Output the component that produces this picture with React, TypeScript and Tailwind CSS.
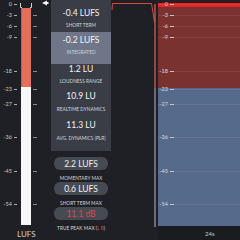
import { FC } from "react";

interface iLevel {
  v: string;
  y: number;
  hi?: boolean;
}

const levels: Array<iLevel> = [
  { v: "0", y: 4 },
  { v: "-3", y: 15 },
  { v: "-6", y: 26 },
  { v: "-9", y: 37 },
  { v: "-18", y: 71 },
  { v: "-23", y: 89, hi: true },
  { v: "-27", y: 104 },
  { v: "-36", y: 137 },
  { v: "-45", y: 171 },
  { v: "-54", y: 204 },
];

interface iStat {
  value: string;
  label: string;
  h: string;
  pt: string;
  gap: string;
  active?: boolean;
}

const stats: Array<iStat> = [
  { value: "-0.4 LUFS", label: "SHORT TERM", h: "h-[32px]", pt: "pt-[8px]", gap: "mt-[4px]" },
  { value: "-0.2 LUFS", label: "INTEGRATED", h: "h-[32px]", pt: "pt-[3px]", gap: "mt-[4px]", active: true },
  { value: "1.2 LU", label: "LOUDNESS RANGE", h: "h-[27px]", pt: "pt-0", gap: "mt-[4px]" },
  { value: "10.9 LU", label: "REALTIME DYNAMICS", h: "h-[28px]", pt: "pt-0", gap: "mt-[5px]" },
  { value: "11.3 LU", label: "AVG. DYNAMICS (PLR)", h: "h-[27px]", pt: "pt-[1px]", gap: "mt-[5px]" },
];

const StatRow: FC<iStat> = ({ value, label, h, pt, gap, active }) => (
  <div className={`${h} ${pt} flex flex-col items-center ${active ? "bg-[#6f7687]" : ""}`}>
    <div className="h-[10px] leading-[10px] text-[8.5px] text-[#f4f4f6]">{value}</div>
    <div className={`${gap} h-[6px] leading-[6px] text-[4.8px] text-[#d2d5db] whitespace-nowrap`}>{label}</div>
  </div>
);

const Pill: FC<{ value: string; label: React.ReactNode; red?: boolean }> = ({ value, label, red }) => (
  <div className="flex flex-col items-center">
    <div className="w-[54px] h-[13px] rounded-[6px] bg-[#464a53] flex items-center justify-center">
      <span className={`text-[8.5px] leading-[10px] ${red ? "text-[#e0444c]" : "text-[#f2f2f4]"}`}>{value}</span>
    </div>
    <div className="mt-[5px] h-[6px] leading-[6px] text-[4.8px] text-[#d2d5db] whitespace-nowrap">{label}</div>
  </div>
);

const App: FC = () => {
  return (
    <div className="w-[240px] h-[240px] overflow-hidden bg-[#1f2025] flex font-['Lato',sans-serif]">
      {/* meter */}
      <div className="relative w-[51px] h-full flex flex-col">
        <div className="flex pl-[21px] pt-[8px]">
          <div className="w-[10px] h-[217px] flex flex-col">
            <div className="h-[79px] bg-[#e26f5e] border-l border-[#c85848]" />
            <div className="flex-1 bg-[#f7f7f7]" />
          </div>
        </div>
        <div className="mt-auto mb-[1px] pl-[17px] text-[8px] leading-[10px] text-[#d0d2d6]">LUFS</div>

        {levels.map((l) => (
          <div key={l.v} className="absolute left-0 h-[6px] flex items-center" style={{ top: l.y - 3 }}>
            <span
              className={`w-[12px] text-right text-[5.5px] leading-[6px] ${l.hi ? "text-[#d9c27c]" : "text-[#c9cbd0]"}`}
            >
              {l.v}
            </span>
            <span className="ml-[1.5px] w-[3.5px] h-px bg-[#a9abb0]" />
          </div>
        ))}
        {levels.slice(1).map((l) => (
          <div key={l.v} className="absolute left-[33px] w-[4px] h-px bg-[#85888e]" style={{ top: l.y }} />
        ))}
        <svg className="absolute left-0 top-0" width="51" height="10">
          <path d="M20.5 3 V7.5 H22" stroke="#d0d0d0" strokeWidth="1" fill="none" />
          <path d="M31.5 3 V7.5 H30" stroke="#d0d0d0" strokeWidth="1" fill="none" />
          <polygon points="42,3 47,0.5 47,5.5" fill="#f4f4f4" />
          <rect x="47" y="2" width="1.5" height="2" fill="#f4f4f4" />
        </svg>
      </div>

      {/* stats */}
      <div className="w-[60px] h-full flex flex-col">
        <div className="bg-[#3a3d45] pb-[5px] flex flex-col">
          {stats.map((s) => (
            <StatRow key={s.label} {...s} />
          ))}
        </div>
        <div className="mt-[6px] flex flex-col gap-[1px]">
          <Pill value="2.2 LUFS" label="MOMENTARY MAX" />
          <Pill value="0.6 LUFS" label="SHORT TERM MAX" />
          <Pill
            value="11.1 dB"
            red
            label={
              <>
                TRUE PEAK MAX (<span className="text-[#e0444c]">L</span> <span className="text-[#e0444c]">R</span>)
              </>
            }
          />
        </div>
      </div>

      {/* history line */}
      <div className="w-[47px] h-full">
        <svg width="47" height="240">
          <path d="M1 10 L1.5 3.5 H40.5 L43.5 22" stroke="#d9463f" strokeWidth="1" fill="none" />
          <line x1="44" y1="4" x2="44" y2="88" stroke="#d9665c" strokeWidth="1.2" />
          <line x1="44" y1="88" x2="44" y2="227" stroke="#9ea2a9" strokeWidth="1.2" />
        </svg>
      </div>

      {/* loudness history */}
      <div className="flex-1 h-full flex flex-col">
        <div className="relative h-[226px] flex flex-col">
          <div className="h-[3px] bg-[#2a1f20]" />
          <div className="h-[4px] bg-[#e2262a]" />
          <div className="h-[81px] bg-[#7a322f]" />
          <div className="flex-1 bg-[#566a8c]" />
          {levels.map((l) => (
            <div key={l.v} className="absolute left-0 right-0 h-px bg-white/[0.07]" style={{ top: l.y }} />
          ))}
          {levels.map((l) => (
            <div key={l.v} className="absolute left-0 h-[6px] flex items-center" style={{ top: l.y - 3 }}>
              <span className="w-[10px] text-right text-[5.5px] leading-[6px] text-[#d6d7da]">{l.v}</span>
              <span className="ml-[2px] w-[3.5px] h-px bg-[#c2c4c8]" />
            </div>
          ))}
        </div>
        <div className="flex-1 bg-[#1b1c20] pl-[47px] pt-[4px] text-[6px] leading-[7px] text-[#c4c6cb]">24s</div>
      </div>
    </div>
  );
};

export default App;
